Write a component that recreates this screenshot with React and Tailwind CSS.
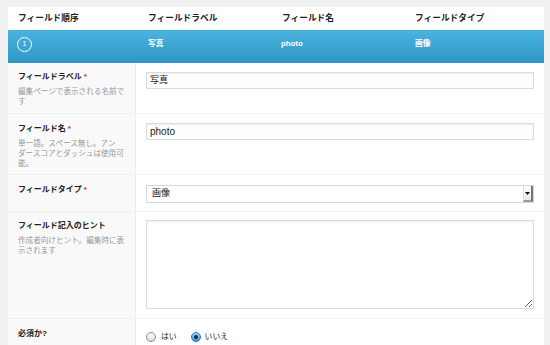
const font = { fontFamily: '"Liberation Sans", "Noto Sans CJK JP", sans-serif' };

const Label = ({ text, required, desc, top }) => (
  <div className={`w-[128px] shrink-0 bg-[#f9f9f9] border-r border-[#ececec] pl-[10px] pr-[6px] ${top}`}>
    <div className="text-[8px] font-bold text-[#222] leading-[10px]">
      {text}
      {required && <span className="text-[#dd2222] ml-[2px]">*</span>}
    </div>
    {desc && (
      <div className="mt-[5px] text-[7.6px] leading-[10px] text-[#999]">
        {desc.map((line, i) => (
          <div key={i}>{line}</div>
        ))}
      </div>
    )}
  </div>
);

const Row = ({ children, className }) => (
  <div className={`flex border-b border-[#f0f0f0] ${className}`}>{children}</div>
);

export default function App() {
  return (
    <div className="w-[550px] h-[345px] overflow-hidden bg-[#f1f1f1] pt-[7px] pl-[8px] pr-[6px]" style={font}>
      <div className="bg-white h-[338px]">
        {/* header */}
        <div className="grid grid-cols-[130px_134px_133px_1fr] pl-[10px] h-[23px] items-center text-[8.7px] font-bold text-[#222]">
          <div>フィールド順序</div>
          <div>フィールドラベル</div>
          <div>フィールド名</div>
          <div>フィールドタイプ</div>
        </div>

        {/* active field bar */}
        <div className="grid grid-cols-[130px_134px_133px_1fr] pl-[9px] h-[33px] bg-gradient-to-b from-[#4ab3df] to-[#2d97c6] text-white text-[7.8px] font-semibold">
          <div className="pt-[7px]">
            <div className="w-[15px] h-[15px] rounded-full border border-white flex items-center justify-center text-[7px] font-normal">1</div>
          </div>
          <div className="pt-[8px] pl-[1px] font-bold">写真</div>
          <div className="pt-[8px]">photo</div>
          <div className="pt-[8px] pl-[1px] font-bold">画像</div>
        </div>

        <Row className="h-[51px]">
          <Label top="pt-[9px]" text="フィールドラベル" required desc={["編集ページで表示される名前で", "す"]} />
          <div className="flex-1 px-[10px] pt-[9px]">
            <div className="h-[17px] border border-[#dcdcdc] shadow-[inset_0_1px_2px_rgba(0,0,0,0.07)] bg-[#fdfdfd] flex items-center pl-[3px] text-[9px] text-[#222]">写真</div>
          </div>
        </Row>

        <Row className="h-[61px]">
          <Label top="pt-[10px]" text="フィールド名" required desc={["単一語。スペース無し。アン", "ダースコアとダッシュは使用可", "能。"]} />
          <div className="flex-1 px-[10px] pt-[9px]">
            <div className="h-[17px] border border-[#dcdcdc] shadow-[inset_0_1px_2px_rgba(0,0,0,0.07)] bg-[#fdfdfd] flex items-center pl-[3px] text-[10px] text-[#222]">photo</div>
          </div>
        </Row>

        <Row className="h-[37px]">
          <Label top="pt-[10px]" text="フィールドタイプ" required />
          <div className="flex-1 px-[10px] pt-[10px]">
            <div className="h-[18px] border border-[#d6d6d6] bg-white flex items-center justify-between pl-[5px] pr-0 text-[9px] text-[#222]">
              <span>画像</span>
              <span className="w-[10px] h-[16px] border-l border-[#ddd] border-r-2 border-b-2 border-r-[#777] border-b-[#999] bg-gradient-to-b from-white to-[#e8e8e8] flex items-center justify-center">
                <svg width="5" height="3" viewBox="0 0 5 3"><path d="M0 0h5L2.5 3z" fill="#111" /></svg>
              </span>
            </div>
          </div>
        </Row>

        <Row className="h-[107px]">
          <Label top="pt-[9px]" text="フィールド記入のヒント" desc={["作成者向けヒント。編集時に表", "示されます"]} />
          <div className="flex-1 px-[10px] pt-[8px]">
            <textarea readOnly className="block w-full h-[89px] border border-[#dcdcdc] bg-white shadow-[inset_0_1px_2px_rgba(0,0,0,0.07)] outline-none" />
          </div>
        </Row>

        <div className="flex h-[40px]">
          <Label top="pt-[10px]" text="必須か?" />
          <div className="flex-1 px-[10px] pt-[12px] flex items-start gap-[8px] text-[7.8px] text-[#222]">
            <label className="flex items-center gap-[5px]">
              <span className="w-[10px] h-[10px] rounded-full border border-[#8a8a8a] bg-gradient-to-b from-white to-[#dcdcdc]" />
              <span>はい</span>
            </label>
            <label className="flex items-center gap-[4px] ml-[6px]">
              <span className="w-[10px] h-[10px] rounded-full border border-[#2f6fb8] bg-gradient-to-b from-[#a9d4f7] to-[#3b8ee0] flex items-center justify-center">
                <span className="w-[4px] h-[4px] rounded-full bg-[#1a2a3a]" />
              </span>
              <span>いいえ</span>
            </label>
          </div>
        </div>
      </div>
    </div>
  );
}
